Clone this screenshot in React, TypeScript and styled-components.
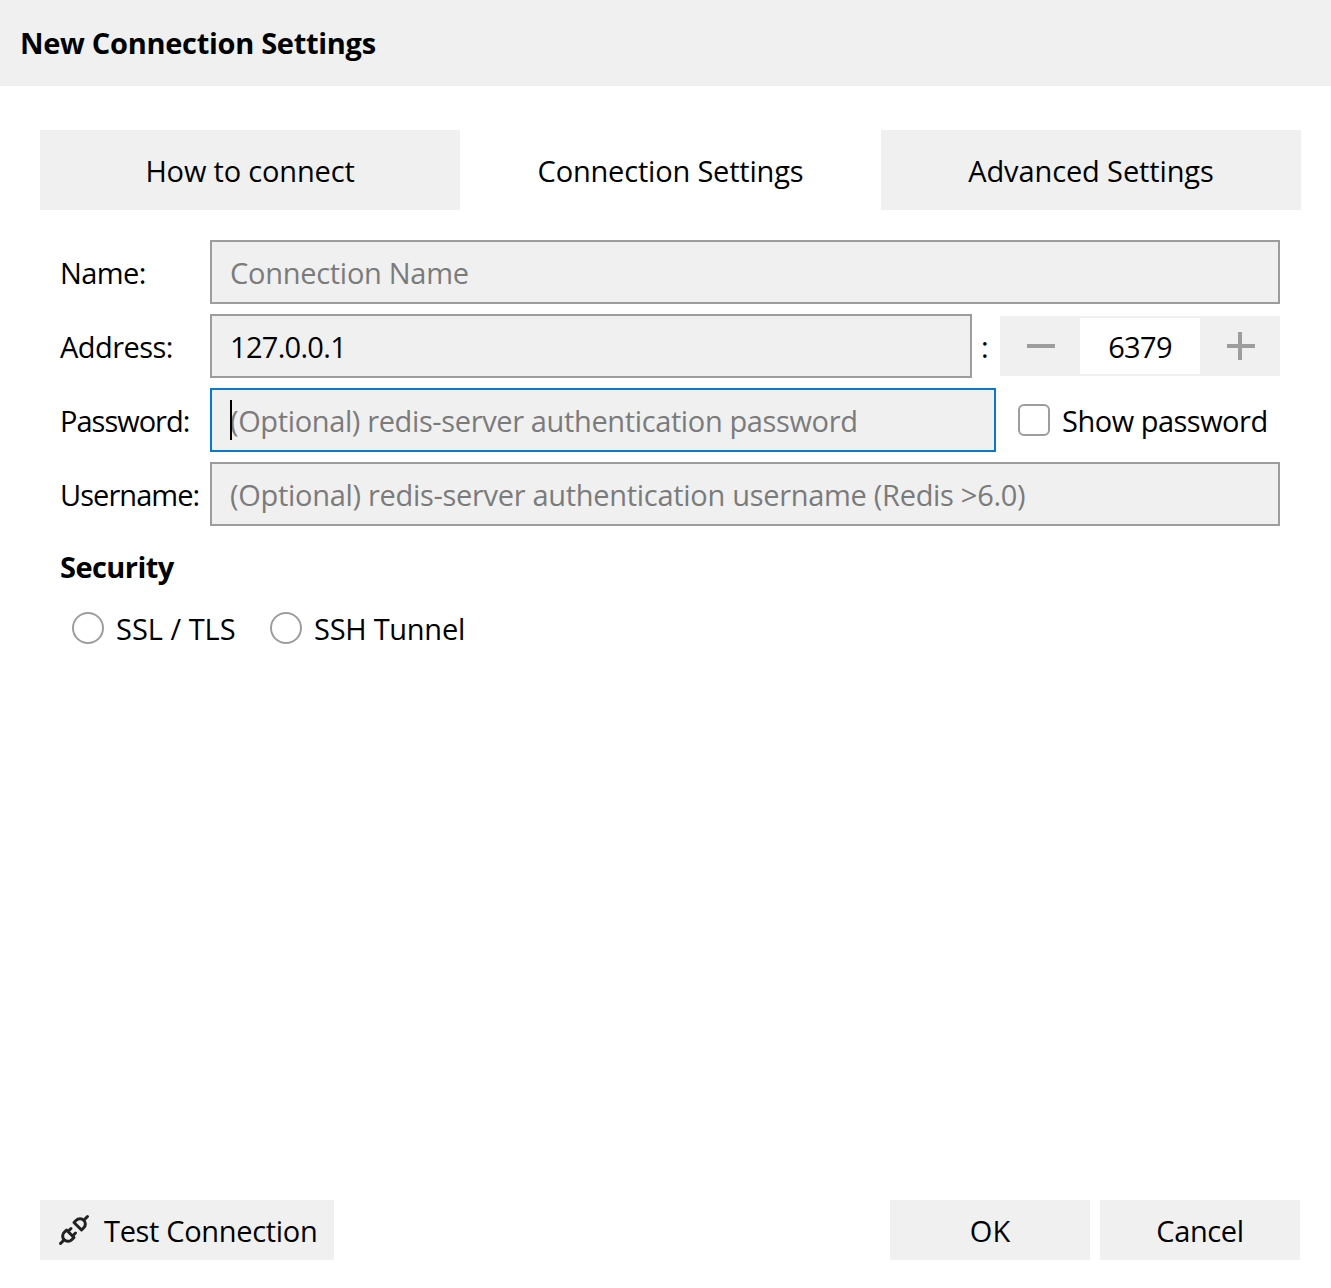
import React from "react";
import styled, { createGlobalStyle } from "styled-components";
import { TbPlugConnected } from "react-icons/tb";

const GlobalStyle = createGlobalStyle`
  *, *::before, *::after { box-sizing: border-box; }
  body { margin: 0; background: #fff; }
`;

const Dialog = styled.main`
  display: flex;
  flex-direction: column;
  width: 1331px;
  height: 1288px;
  background: #fff;
  color: #000;
  font-family: "Open Sans", "Noto Sans", sans-serif;
  font-size: 29px;
  line-height: 40px;
  white-space: nowrap;
`;

const Label = styled.span<{ $track?: number }>`
  letter-spacing: ${(p) => p.$track ?? 0}px;
`;

const TitleBar = styled.header`
  height: 86px;
  padding: 23px 20px 0;
  background: #f0f0f0;
  font-weight: 700;
`;

const Tabs = styled.nav`
  display: grid;
  grid-template-columns: 420px 420px 420px;
  justify-content: space-between;
  height: 80px;
  margin: 44px 30px 0 40px;
`;

const Tab = styled.div<{ $active?: boolean }>`
  padding-top: 21px;
  text-align: center;
  background: ${(p) => (p.$active ? "#fff" : "#f0f0f0")};
`;

const Form = styled.section`
  display: flex;
  flex-direction: column;
  gap: 10px;
  flex: 1;
  padding: 30px 51px 0 60px;
`;

const Row = styled.div`
  display: flex;
  height: 64px;
`;

const RowLabel = styled.div`
  width: 150px;
  flex: none;
  padding-top: 13px;
`;

const Field = styled.div<{ $focus?: boolean; $filled?: boolean }>`
  position: relative;
  flex: 1;
  padding: 11px 18px 0;
  border: 2px solid ${(p) => (p.$focus ? "#0b78d0" : "#9d9d9d")};
  background: #f0f0f0;
  color: ${(p) => (p.$filled ? "#000" : "#7b7b7b")};
`;

const Caret = styled.i`
  position: absolute;
  left: 18px;
  top: 10px;
  width: 2px;
  height: 40px;
  background: #000;
`;

const Colon = styled.div`
  width: 28px;
  padding: 13px 0 0 9px;
`;

const SpinBox = styled.div`
  display: grid;
  grid-template-columns: 80px 120px 80px;
  height: 60px;
  margin-top: 2px;
  background: #f0f0f0;
`;

const SpinButton = styled.div`
  display: flex;
  align-items: center;
  justify-content: center;
  padding-left: 2px;
`;

const SpinIcon = styled.svg`
  width: 28px;
  height: 28px;
  stroke: #9d9d9d;
  stroke-width: 4;
`;

const SpinValue = styled.div`
  margin: 2px 0;
  padding-top: 9px;
  background: #fff;
  text-align: center;
`;

const CheckOption = styled.div`
  display: flex;
  gap: 12px;
  width: 284px;
  padding: 13px 0 0 22px;
`;

const CheckMark = styled.span`
  width: 32px;
  height: 32px;
  margin-top: 3px;
  border: 2px solid #9d9d9d;
  border-radius: 6px;
  background: #fff;
`;

const SectionTitle = styled.h2`
  margin: 11px 0 0;
  font-size: inherit;
  line-height: 40px;
  font-weight: 700;
`;

const Options = styled.div`
  display: flex;
  padding: 12px 0 0 12px;
`;

const Radio = styled.div`
  display: flex;
  gap: 12px;
  width: 198px;
`;

const RadioMark = styled.span`
  width: 32px;
  height: 32px;
  flex: none;
  margin-top: 3px;
  border: 2px solid #9d9d9d;
  border-radius: 50%;
`;

const Footer = styled.footer`
  display: flex;
  gap: 10px;
  height: 60px;
  margin: 0 31px 28px 40px;
`;

const Button = styled.div`
  display: flex;
  justify-content: center;
  width: 200px;
  padding-top: 11px;
  background: #f0f0f0;
`;

const TestButton = styled(Button)`
  justify-content: flex-start;
  gap: 12px;
  width: 294px;
  margin-right: auto;
  padding-left: 16px;
`;

const PlugIcon = styled(TbPlugConnected)`
  width: 36px;
  height: 36px;
  margin-top: 1px;
  color: #222;
`;

export default function App() {
  return (
    <Dialog>
      <GlobalStyle />
      <TitleBar>
        <Label $track={-0.3}>New Connection Settings</Label>
      </TitleBar>
      <Tabs>
        <Tab><Label $track={-0.17}>How to connect</Label></Tab>
        <Tab $active><Label $track={-0.19}>Connection Settings</Label></Tab>
        <Tab><Label $track={-0.12}>Advanced Settings</Label></Tab>
      </Tabs>
      <Form>
        <Row>
          <RowLabel><Label $track={-0.6}>Name:</Label></RowLabel>
          <Field><Label $track={-0.28}>Connection Name</Label></Field>
        </Row>
        <Row>
          <RowLabel><Label $track={-0.55}>Address:</Label></RowLabel>
          <Field $filled><Label $track={-0.7}>127.0.0.1</Label></Field>
          <Colon>:</Colon>
          <SpinBox>
            <SpinButton>
              <SpinIcon viewBox="0 0 28 28"><path d="M0 14H28" /></SpinIcon>
            </SpinButton>
            <SpinValue><Label $track={-0.7}>6379</Label></SpinValue>
            <SpinButton>
              <SpinIcon viewBox="0 0 28 28"><path d="M0 14H28M13 0V28" /></SpinIcon>
            </SpinButton>
          </SpinBox>
        </Row>
        <Row>
          <RowLabel><Label $track={-1}>Password:</Label></RowLabel>
          <Field $focus>
            <Label $track={-0.37}>(Optional) redis-server authentication password</Label>
            <Caret />
          </Field>
          <CheckOption>
            <CheckMark />
            <Label $track={-0.5}>Show password</Label>
          </CheckOption>
        </Row>
        <Row>
          <RowLabel><Label $track={-0.95}>Username:</Label></RowLabel>
          <Field><Label $track={-0.3}>{"(Optional) redis-server authentication username (Redis >6.0)"}</Label></Field>
        </Row>
        <SectionTitle><Label $track={-0.57}>Security</Label></SectionTitle>
        <Options>
          <Radio><RadioMark /><Label>SSL / TLS</Label></Radio>
          <Radio><RadioMark /><Label $track={-0.27}>SSH Tunnel</Label></Radio>
        </Options>
      </Form>
      <Footer>
        <TestButton>
          <PlugIcon />
          <Label $track={-0.33}>Test Connection</Label>
        </TestButton>
        <Button><Label>OK</Label></Button>
        <Button><Label $track={-0.4}>Cancel</Label></Button>
      </Footer>
    </Dialog>
  );
}
